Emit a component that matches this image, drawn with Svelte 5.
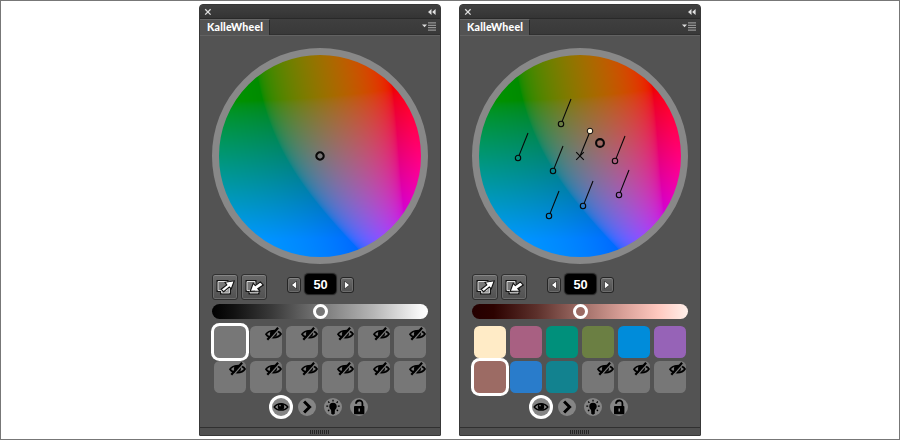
<script>
  const panels = [
    {
      dot: [0, 0, 3.7],
      pins: [],
      ramp: 'linear-gradient(90deg,#000 0%,#111 10%,#3a3a3a 28%,#777 50%,#b6b6b6 75%,#f7f7f7 96%,#fff 100%)',
      knob: '#777',
      selected: 0,
      swatches: ['#777', null, null, null, null, null, null, null, null, null, null, null]
    },
    {
      dot: [20, -13, 3.9],
      pins: [[-19, -32], [-62, 2], [-27, 15], [35, 5], [39, 39], [3, 50], [-31, 60]],
      ramp: 'linear-gradient(90deg,#240000 0%,#2c0200 10%,#5c302b 30%,#9c6b64 50%,#d9a098 70%,#ffc8bf 86%,#fff0ea 100%)',
      knob: '#9c6b64',
      selected: 6,
      swatches: ['#ffebc6', '#a86082', '#00907b', '#6b7f43', '#008cda', '#9663b7', '#9c6b64', '#297ccb', '#12828f', null, null, null]
    }
  ];

  const finv = (t) => (t > 6 / 29 ? t * t * t : (t - 4 / 29) * 3 * (6 / 29) ** 2);
  const gamma = (v) => {
    const c = Math.min(1, Math.max(0, v));
    return 255 * (c <= 0.0031308 ? 12.92 * c : 1.055 * c ** (1 / 2.4) - 0.055);
  };

  // Fills the disc with the a/b plane of Lab (D65) at lightness 50.
  function paint(canvas) {
    const n = canvas.width;
    const ctx = canvas.getContext('2d');
    const img = ctx.createImageData(n, n);
    const fy = 66 / 116;
    const Y = finv(fy);
    for (let j = 0; j < n; j++) {
      for (let i = 0; i < n; i++) {
        const b = (n / 2 - j - 0.5) * 0.95;
        const a = i + 0.5 - n / 2 + (b > 0 ? 7 : 2.5) * (b / 90) ** 2;
        const X = 0.9505 * finv(fy + a / 500);
        const Z = 1.089 * finv(fy - b / 200);
        const k = (j * n + i) * 4;
        img.data[k] = gamma(3.2406 * X - 1.5372 * Y - 0.4986 * Z);
        img.data[k + 1] = gamma(-0.9689 * X + 1.8758 * Y + 0.0415 * Z);
        img.data[k + 2] = gamma(0.0557 * X - 0.204 * Y + 1.057 * Z);
        img.data[k + 3] = 255;
      }
    }
    ctx.putImageData(img, 0, 0);
  }
</script>

<main>
  {#each panels as p}
    <section class="panel">
      <header class="bar">
        <svg width="8" height="8" viewBox="0 0 8 8"><path d="M1.2 1.2 6.6 6.6M6.6 1.2 1.2 6.6" stroke="#ddd" stroke-width="1.3" /></svg>
        <svg width="8" height="6" viewBox="0 0 8 6"><path d="M3.5 0v6L0 3zM7.6 0v6L4.1 3z" fill="#ddd" /></svg>
      </header>
      <div class="tabs">
        <div class="tab">KalleWheel</div>
        <svg width="14" height="9" viewBox="0 0 14 9"><path d="M0 2.5h5L2.5 5.2z" fill="#ddd" /><path d="M6 .9h8M6 3.3h8M6 5.7h8M6 8.1h8" stroke="#aaa" stroke-width="1" /></svg>
      </div>
      <div class="body">
        <div class="wheel">
          <canvas width="204" height="204" use:paint></canvas>
          <svg class="marks" width="216" height="216" viewBox="-108 -108 216 216" fill="none" stroke="#080808">
            <circle r="104.5" stroke="#888" stroke-width="7" />
            {#each p.pins as [x, y]}
              <circle cx={x} cy={y} r="2.7" stroke-width="1.1" />
              <path d="M{x + 1.1} {y - 2.6}L{x + 10} {y - 25}" stroke-width="1.1" />
            {/each}
            {#if p.pins.length}
              <path d="M0 0 9 -22M-3.8 -3.8 3.8 3.8M3.8 -3.8 -3.8 3.8" stroke-width="1.1" />
              <circle cx="10" cy="-25" r="2.8" fill="#fff4d8" />
            {/if}
            <circle cx={p.dot[0]} cy={p.dot[1]} r={p.dot[2]} stroke-width="2.1" />
          </svg>
        </div>

        <div class="controls">
          <button class="tool" aria-label="Send">
            <svg width="19" height="17" viewBox="0 0 19 17"><path d="M2 2.5h9v9H2zM5.500 6.500h8V14h-8z" fill="#999" stroke="#151515" stroke-width="3" /><path d="M5.500 8.500h8V14h-8z" fill="#999" stroke="#ccc" /><path d="M2 2.500h9v9H2z" fill="#777" stroke="#ddd" /><path d="M5.200 10.300 10.800 6 9 3.300 18.300 1.800 15.300 9.800 13.300 7.900 7.700 12.700z" fill="#fff" stroke="#111" stroke-width="1.1" /></svg>
          </button>
          <button class="tool" aria-label="Fetch">
            <svg width="19" height="17" viewBox="0 0 19 17"><path d="M2 2.500h8v9H2zM5 6.500h8V14H5z" fill="#999" stroke="#151515" stroke-width="3" /><path d="M5 8.500h8V14H5z" fill="#999" stroke="#ccc" /><path d="M2 2.500h8v9H2z" fill="#777" stroke="#ddd" /><path d="M5.200 12.400 8.200 4.300 10.300 6.600 15.400 2.900 18.300 6 12.800 9.700 14.700 12z" fill="#fff" stroke="#111" stroke-width="1.1" /></svg>
          </button>
          <button class="step first" aria-label="Less"><svg width="6" height="8" viewBox="0 0 6 8"><path d="M5.5 0v8L.5 4z" fill="#fff" stroke="#111" stroke-width=".6" /></svg></button>
          <div class="value">50</div>
          <button class="step" aria-label="More"><svg width="6" height="8" viewBox="0 0 6 8"><path d="M.5 0v8L5.5 4z" fill="#fff" stroke="#111" stroke-width=".6" /></svg></button>
        </div>

        <div class="slider" style:background={p.ramp}>
          <span class="knob" style:background={p.knob}></span>
        </div>

        <div class="swatches">
          {#each p.swatches as color, i}
            <div class="swatch" class:selected={i === p.selected} style:background={color ?? '#777'}>
              {#if !color}
                <svg width="17" height="14" viewBox="0 0 17 14">
                  <path d="M1 7.2C4 2.6 13 2.6 16 7C13 11.7 4 11.7 1 7.2z" fill="none" stroke="#000" stroke-width="1.7" />
                  <circle cx="8.5" cy="6.6" r="3.5" />
                  <path d="M3.8 13.6 14.6 1.6" stroke="#777" stroke-width="1.5" />
                  <path d="M2.3 12.8 13.1 .8" stroke="#000" stroke-width="2.2" />
                </svg>
              {/if}
            </div>
          {/each}
        </div>

        <div class="modes">
          <span class="mode on">
            <svg width="18" height="18" viewBox="0 0 18 18"><path d="M2.2 9C5.3 4.6 12.7 4.6 15.8 9C12.7 13.2 5.3 13.2 2.2 9z" fill="none" stroke="#000" stroke-width="1.4" /><circle cx="9" cy="8.8" r="3.2" /><circle cx="8" cy="7.6" r=".8" fill="#888" /></svg>
          </span>
          <span class="mode">
            <svg width="18" height="18" viewBox="0 0 18 18"><path d="M6.1 3.5 11.6 9 6.1 14.5" fill="none" stroke="#000" stroke-width="3" /></svg>
          </span>
          <span class="mode">
            <svg width="18" height="18" viewBox="0 0 18 18"><circle cx="9" cy="8.5" r="3.7" /><path d="M7 10.5h4l-.3 5-1 .9H8.3l-1-.9z" /><path d="M9 1.7v1.9M4.2 3.5l1.2 1.3M13.8 3.5l-1.2 1.3M2.3 8.2h1.9M13.8 8.2h1.9M4 13l1.3-1.2M14 13l-1.3-1.2" stroke="#000" stroke-width="1.2" /></svg>
          </span>
          <span class="mode">
            <svg width="18" height="18" viewBox="0 0 18 18"><rect x="4" y="8" width="10.4" height="8.2" rx=".8" /><path d="M6 5.8C6 1.5 12.4 1.5 12.4 5.2V9" fill="none" stroke="#000" stroke-width="1.8" /><path d="M9.2 10.5v3" stroke="#888" stroke-width="1.5" /></svg>
          </span>
        </div>
      </div>
      <footer><i></i></footer>
    </section>
  {/each}
</main>

<style>
  :global(body) { background: #fff; }
  * { box-sizing: border-box; }
  main {
    width: 900px; height: 440px; padding-top: 3px; border: 1px solid #777;
    background: #fff; display: flex; justify-content: center; align-items: flex-start; gap: 18px;
    overflow: hidden;
  }
  .panel {
    width: 242px; height: 432px; display: flex; flex-direction: column;
    background: #535353; border: 1px solid #383838; border-radius: 4px 4px 1px 1px;
    font-family: "Open Sans", "Noto Sans", sans-serif; overflow: hidden;
  }
  .bar {
    height: 13px; flex: none; display: flex; align-items: center; justify-content: space-between;
    padding: 1px 4px 0 4px; background: linear-gradient(#404040, #343434);
  }
  .tabs {
    height: 17px; flex: none; display: flex; align-items: center; justify-content: space-between;
    padding-right: 4px; background: linear-gradient(#3f3f3f, #393939);
    border-top: 1px solid #292929; border-bottom: 1px solid #303030;
  }
  .tab {
    width: 70px; height: 17px; align-self: flex-start; padding-left: 7px; background: #535353;
    border-right: 1px solid #292929; border-top: 1px solid #666;
    color: #fff; font: 900 10.6px/15px "Lato", "Open Sans", sans-serif; white-space: nowrap; letter-spacing: .18px;
  }
  .body { flex: 1; padding: 12px 12px 0; border-top: 1px solid #626262; }
  .wheel { position: relative; width: 216px; height: 216px; display: grid; place-items: center; }
  canvas { display: block; border-radius: 50%; }
  .marks { position: absolute; left: 0; top: 0; }
  .controls { height: 40px; padding-top: 10px; display: flex; align-items: flex-start; }
  button { padding: 0; display: grid; place-items: center; border: 1px solid #252525; box-shadow: inset 0 1px #858585, inset 0 0 0 1px #6c6c6c; background: linear-gradient(#696969, #515151); border-radius: 3px; }
  .tool { width: 26px; height: 26px; margin-right: 3px; border-color: #303030; }
  .step { width: 14px; height: 16px; margin-top: 3px; }
  .first { margin-left: 17px; }
  .value {
    width: 31px; height: 20px; margin: 0 4px; border-radius: 4px; background: #000; color: #fff;
    box-shadow: 0 0 1px 0.5px #222; text-align: center; font: bold 12.8px/21px "Liberation Sans", sans-serif;
  }
  .slider { height: 15px; border-radius: 8px; display: grid; place-items: center; }
  .knob { width: 15px; height: 15px; border: 3px solid #fff; border-radius: 50%; }
  .swatches { display: grid; grid-template-columns: repeat(6, 32px); gap: 3px 4px; padding: 7px 2px 0; }
  .swatch { height: 32px; border-radius: 5.5px; display: flex; justify-content: flex-end; align-items: flex-start; }
  .swatch svg { flex: none; margin-top: 1px; }
  .selected { box-shadow: 0 0 0 3px #fff; position: relative; }
  .modes { display: flex; justify-content: center; gap: 8px; padding-top: 5px; }
  .mode { width: 18px; height: 18px; border-radius: 50%; background: #858585; }
  .mode svg { display: block; }
  .on { box-shadow: 0 0 0 3px #fff; }
  footer { height: 8px; flex: none; border-top: 1px solid #303030; display: grid; place-items: center; background: #505050; }
  i { width: 20px; height: 4px; background: repeating-linear-gradient(90deg, #242424 0 1px, #555 1px 2px); }
</style>
